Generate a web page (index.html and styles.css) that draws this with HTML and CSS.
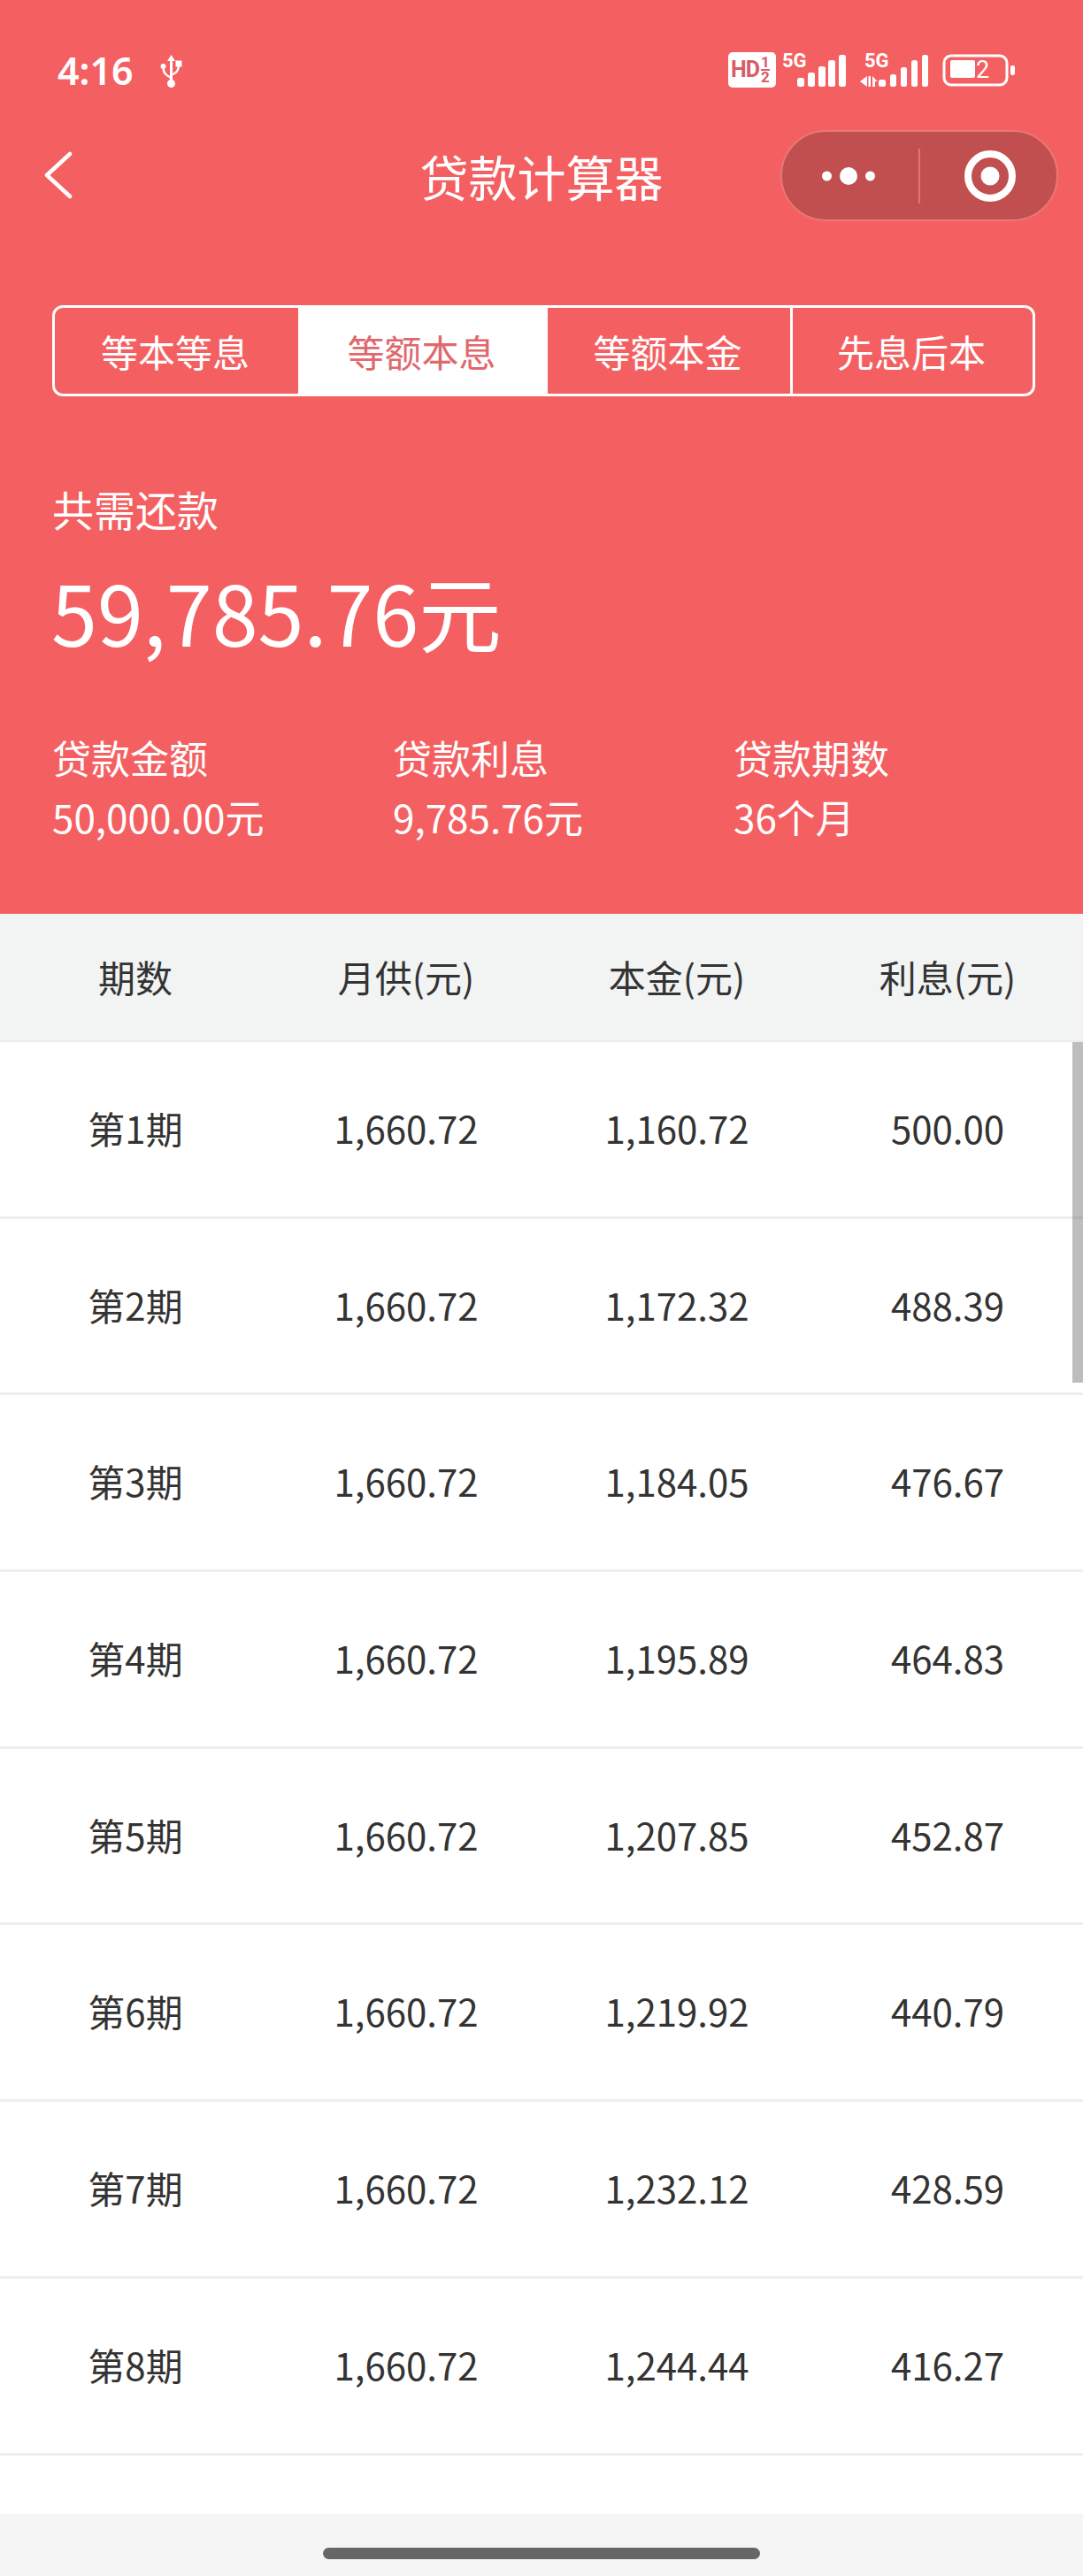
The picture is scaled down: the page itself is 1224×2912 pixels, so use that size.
FILE: index.html
```html
<!DOCTYPE html>
<html lang="zh-CN">
<head>
<meta charset="UTF-8">
<meta name="viewport" content="width=device-width, initial-scale=1.0">
<title>贷款计算器</title>
<link rel="stylesheet" href="styles.css">
</head>
<body>
<div class="page">

  <div class="hero">
    <!-- status bar -->
    <div class="status">
      <div class="status-left">
        <span class="time">4:16</span>
        <svg class="usb" width="25" height="37" viewBox="0 0 25 37">
          <path d="M12.5 0 L17 7 H14 V29 H11 V7 H8 Z" fill="#fff"/>
          <circle cx="12.5" cy="32.5" r="4.5" fill="#fff"/>
          <path d="M12.5 26 C7 23 3.5 21 3.5 14" fill="none" stroke="#fff" stroke-width="2.4"/>
          <circle cx="3.5" cy="13" r="3" fill="#fff"/>
          <path d="M12.5 23 C18 20 21 18.5 21 12" fill="none" stroke="#fff" stroke-width="2.4"/>
          <rect x="17.5" y="6.5" width="7" height="7" fill="#fff"/>
        </svg>
      </div>
      <div class="status-right">
        <div class="hd">
          <span class="hd-text">HD</span>
          <span class="hd-frac"><span>1</span><span>2</span></span>
        </div>
        <svg class="sig sig-a" width="74" height="46" viewBox="0 -6 74 46">
          <text x="1" y="17" class="sig-label">5G</text>
          <rect x="18" y="29" width="8" height="10" rx="2.5" fill="#fff"/>
          <rect x="30" y="23" width="8" height="16" rx="2.5" fill="#fff"/>
          <rect x="42" y="16" width="8" height="23" rx="2.5" fill="#fff"/>
          <rect x="53" y="9" width="8" height="30" rx="2.5" fill="#fff"/>
          <rect x="65" y="3" width="8" height="36" rx="2.5" fill="#fff"/>
        </svg>
        <svg class="sig sig-b" width="81" height="46" viewBox="0 -6 81 46">
          <text x="5" y="17" class="sig-label">5G</text>
          <path d="M0 33 L8 27 V39 Z" fill="#fff"/>
          <rect x="9.5" y="27" width="2.5" height="12" fill="#fff"/>
          <path d="M14 27 L19.5 33 H17 V39 H14 Z" fill="#fff"/>
          <rect x="21" y="31" width="8" height="8" rx="2.5" fill="#fff"/>
          <rect x="34" y="25" width="7" height="14" rx="2.5" fill="#fff"/>
          <rect x="46" y="17" width="7" height="22" rx="2.5" fill="#fff"/>
          <rect x="58" y="9" width="7" height="30" rx="2.5" fill="#fff"/>
          <rect x="70" y="3" width="7" height="36" rx="2.5" fill="#fff"/>
        </svg>
        <svg class="battery" width="84" height="38" viewBox="0 0 84 38">
          <rect x="2" y="2" width="71" height="33" rx="8" fill="none" stroke="#fff" stroke-width="3"/>
          <rect x="9" y="7" width="28" height="20" rx="2" fill="#fff"/>
          <text x="38" y="27" class="batt-label">2</text>
          <rect x="77" y="13" width="5" height="11" rx="2" fill="#fff"/>
        </svg>
      </div>
    </div>

    <!-- nav -->
    <div class="nav">
      <svg class="back" width="32" height="54" viewBox="0 0 32 54">
        <path d="M29 3 L3 27 L29 51" fill="none" stroke="#fff" stroke-width="4.5" stroke-linecap="round" stroke-linejoin="round"/>
      </svg>
      <div class="nav-title">贷款计算器</div>
      <div class="capsule">
        <svg class="cap-dots" width="60" height="24" viewBox="0 0 60 24">
          <circle cx="5.5" cy="12" r="5.5" fill="#fff"/>
          <circle cx="30" cy="12" r="10" fill="#fff"/>
          <circle cx="54.5" cy="12" r="5.5" fill="#fff"/>
        </svg>
        <div class="cap-line"></div>
        <svg class="cap-rec" width="58" height="58" viewBox="0 0 58 58">
          <circle cx="29" cy="29" r="25" fill="none" stroke="#fff" stroke-width="8"/>
          <circle cx="29" cy="29" r="10.5" fill="#fff"/>
        </svg>
      </div>
    </div>

    <div class="tabs">
      <div class="tab">等本等息</div>
      <div class="tab active">等额本息</div>
      <div class="tab">等额本金</div>
      <div class="tab">先息后本</div>
    </div>

    <div class="total-label">共需还款</div>
    <div class="total">59,785.76元</div>

    <div class="stats">
      <div class="stat">
        <div>贷款金额</div>
        <div class="stat-val">50,000.00元</div>
      </div>
      <div class="stat">
        <div>贷款利息</div>
        <div class="stat-val">9,785.76元</div>
      </div>
      <div class="stat">
        <div>贷款期数</div>
        <div class="stat-val">36个月</div>
      </div>
    </div>
  </div>

  <div class="thead">
    <div>期数</div>
    <div>月供(元)</div>
    <div>本金(元)</div>
    <div>利息(元)</div>
  </div>

  <div class="tbody">
    <div class="row"><div>第1期</div><div>1,660.72</div><div>1,160.72</div><div>500.00</div></div>
    <div class="row"><div>第2期</div><div>1,660.72</div><div>1,172.32</div><div>488.39</div></div>
    <div class="row"><div>第3期</div><div>1,660.72</div><div>1,184.05</div><div>476.67</div></div>
    <div class="row"><div>第4期</div><div>1,660.72</div><div>1,195.89</div><div>464.83</div></div>
    <div class="row"><div>第5期</div><div>1,660.72</div><div>1,207.85</div><div>452.87</div></div>
    <div class="row"><div>第6期</div><div>1,660.72</div><div>1,219.92</div><div>440.79</div></div>
    <div class="row"><div>第7期</div><div>1,660.72</div><div>1,232.12</div><div>428.59</div></div>
    <div class="row"><div>第8期</div><div>1,660.72</div><div>1,244.44</div><div>416.27</div></div>
    <div class="scrollbar"></div>
  </div>

  <div class="home-bar">
    <div class="home-pill"></div>
  </div>

</div>
</body>
</html>
```
FILE: styles.css
```css
:root {
  --red: #f46062;
  --text: #333;
  --line: #efefef;
}

* { margin: 0; padding: 0; box-sizing: border-box; }

body {
  background: #fff;
  color: var(--text);
  font-family: "Noto Sans CJK SC", "Noto Sans", sans-serif;
}

.page {
  width: 1224px;
  height: 2912px;
  display: flex;
  flex-direction: column;
  overflow: hidden;
}

/* red top part */
.hero {
  background: var(--red);
  color: #fff;
  height: 1033px;
  flex-shrink: 0;
}

.status {
  height: 147px;
  padding: 56px 75px 0 65px;
  display: flex;
  justify-content: space-between;
  align-items: flex-start;
}
.status-left {
  display: flex;
  align-items: center;
  gap: 30px;
}
.time {
  font-family: "Noto Sans", sans-serif;
  font-size: 43px;
  font-weight: 600;
  line-height: 48px;
}
.usb { margin-top: 1px; }

.status-right {
  display: flex;
  align-items: flex-start;
  margin-top: 3px;
}
.hd {
  width: 54px;
  height: 40px;
  background: #fff;
  border-radius: 5px;
  color: #d95b65;
  font-family: Roboto, sans-serif;
  font-weight: 700;
  display: flex;
  align-items: center;
  padding-left: 3px;
}
.hd-text { font-size: 25px; line-height: 40px; letter-spacing: -1px; }
.hd-frac {
  display: flex;
  flex-direction: column;
  margin-left: 2px;
  font-size: 17px;
  line-height: 15px;
  text-align: center;
}
.hd-frac span:first-child { border-bottom: 2px solid #d95b65; }
.sig { margin-top: -6px; }
.sig-a { margin-left: 6px; }
.sig-b { margin-left: 15px; }
.battery { margin-left: 12px; margin-top: 2px; }
.sig-label {
  font-family: Roboto, sans-serif;
  font-size: 22px;
  font-weight: 700;
  fill: #fff;
}
.batt-label {
  font-family: Roboto, sans-serif;
  font-size: 27px;
  fill: #fff;
}

.nav {
  height: 103px;
  position: relative;
  display: flex;
  align-items: center;
  justify-content: center;
}
.back {
  position: absolute;
  left: 50px;
  top: 24px;
}
.nav-title {
  font-size: 55px;
  line-height: 103px;
}
.capsule {
  position: absolute;
  left: 882px;
  top: 0;
  width: 314px;
  height: 103px;
  background: #c14f4f;
  border: 2px solid #ea7676;
  border-radius: 52px;
  display: flex;
  align-items: center;
}
.cap-dots { margin-left: 45px; }
.cap-line {
  width: 2px;
  height: 62px;
  background: #e27474;
  margin-left: 49px;
}
.cap-rec { margin-left: 50px; }

.tabs {
  margin: 95px 0 0 59px;
  width: 1111px;
  height: 103px;
  border: 3px solid #fff;
  border-radius: 12px;
  display: grid;
  grid-template-columns: 275px 279px 277px 274px;
  overflow: hidden;
}
.tab {
  font-size: 42px;
  line-height: 97px;
  text-align: center;
  border-left: 3px solid #fff;
  padding-right: 3px;
}
.tab:first-child { border-left: 0; }
.tab.active {
  background: #fff;
  color: #e0686d;
}

.total-label {
  margin: 97px 0 0 59px;
  font-size: 47px;
  line-height: 60px;
}
.total {
  margin: 26px 0 0 58px;
  font-size: 93.5px;
  line-height: 120px;
}

.stats {
  margin: 75px 0 0 59px;
  display: grid;
  grid-template-columns: repeat(3, 385px);
  font-size: 44px;
  line-height: 60px;
}
.stat-val { margin-top: 7px; }

/* table */
.thead, .row {
  display: grid;
  grid-template-columns: repeat(4, 306px);
  text-align: center;
  font-size: 42px;
  color: var(--text);
}
.thead {
  height: 145px;
  line-height: 141px;
  background: #f2f3f3;
  border-bottom: 2px solid #ececec;
  flex-shrink: 0;
}
.tbody {
  flex: 1;
  position: relative;
  background: #fff;
}
.row {
  height: 199.7px;
  line-height: 193px;
  border-bottom: 3px solid var(--line);
}
.scrollbar {
  position: absolute;
  top: 0;
  right: 0;
  width: 12.5px;
  height: 385px;
  background: rgba(0,0,0,0.26);
}

.home-bar {
  height: 70px;
  flex-shrink: 0;
  background: #f5f5f5;
  display: flex;
  justify-content: center;
  padding-top: 38px;
}
.home-pill {
  width: 494px;
  height: 13px;
  background: #666;
  border-radius: 7px;
}
```
